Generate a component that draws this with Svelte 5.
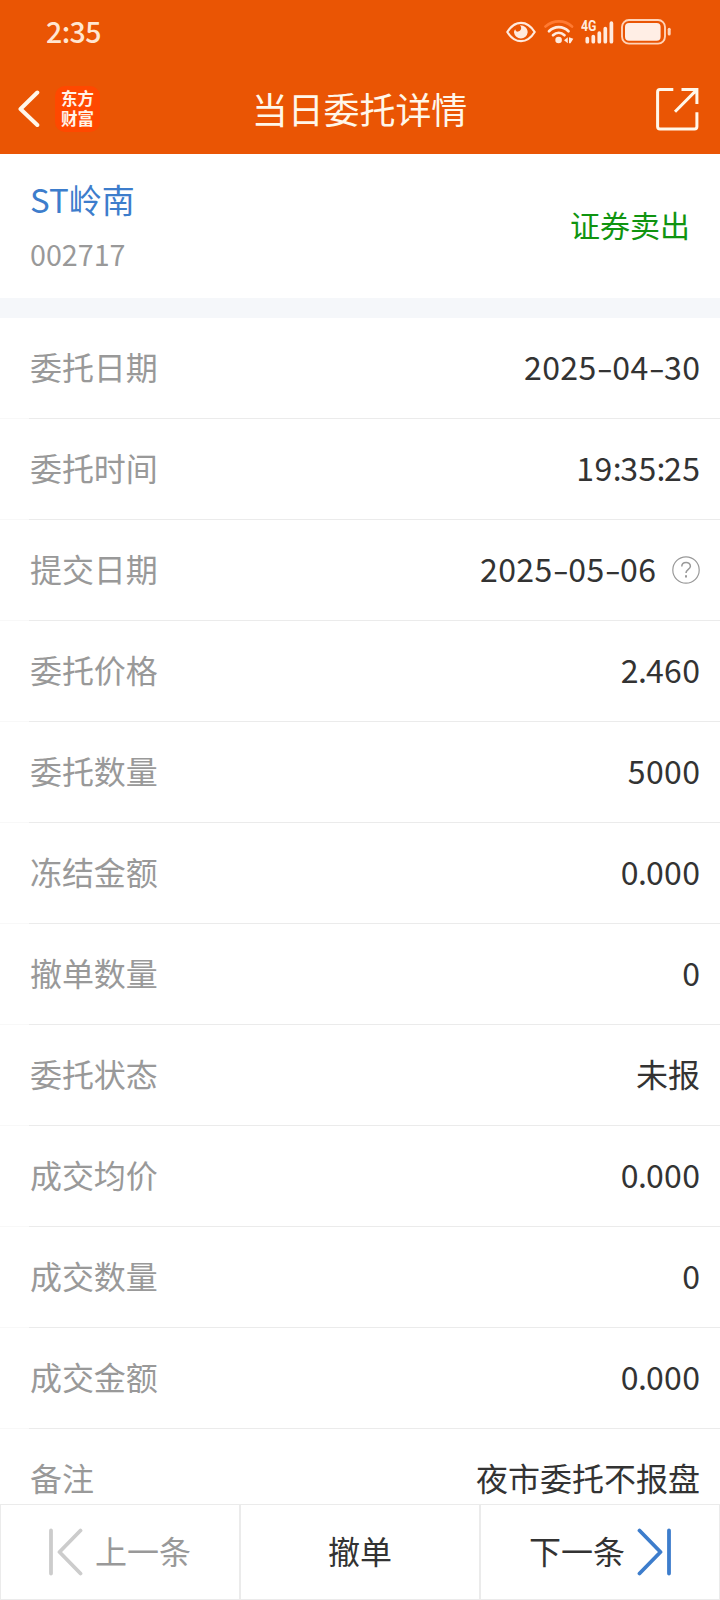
<script>
  const rows = [
    { label: '委托日期', value: '2025-04-30' },
    { label: '委托时间', value: '19:35:25' },
    { label: '提交日期', value: '2025-05-06', help: true },
    { label: '委托价格', value: '2.460' },
    { label: '委托数量', value: '5000' },
    { label: '冻结金额', value: '0.000' },
    { label: '撤单数量', value: '0' },
    { label: '委托状态', value: '未报', cjk: true },
    { label: '成交均价', value: '0.000' },
    { label: '成交数量', value: '0' },
    { label: '成交金额', value: '0.000' },
    { label: '备注', value: '夜市委托不报盘', cjk: true }
  ];
  const kinds = { '-': 'dash', ':': 'colon', '.': 'dot' };
</script>

<div class="screen">
  <header>
    <div class="status">
      <span class="clock">2:35</span>
      <div class="indicators">
        <svg class="eye" width="30" height="22" viewBox="0 0 30 22">
          <path d="M1.300 11C5 5 9.500 1.800 15 1.800S25 5 28.700 11C25 17 20.500 20.200 15 20.200S5 17 1.300 11Z" fill="none" stroke="#ffeade" stroke-width="2.200" stroke-linejoin="round" />
          <path d="M14 4.300C18.500 4.300 21.700 7.200 21.700 11.300A6.900 6.900 0 0 1 8 11.500C8 10 8.400 9 9.200 8.200C9.500 9.800 10.500 10.800 12 10.600C15 10.200 16.300 7 14 4.300Z" fill="#ffeade" />
        </svg>
        <svg class="wifi" width="30" height="24" viewBox="0 0 30 24">
          <g fill="none" stroke-linecap="round" stroke-width="2.700">
            <path d="M1.500 6.500C9.500-.3 20.500-.3 28 6.500" stroke="#ff7a32" />
            <path d="M5 11.200C10.500 5.700 19 5.700 24.500 11.200" stroke="#ffeade" />
            <path d="M9 15.200C12.500 12 17 12 20.500 15.200" stroke="#ffeade" />
          </g>
          <circle cx="14.600" cy="20" r="3.300" fill="#ffeade" />
          <path d="M20 20.200L23.800 17.200V23.200ZM25 17.200L29.300 18.800L26.500 23.200H25Z" fill="#ffeade" />
        </svg>
        <div class="signal">
          <span class="net">4G</span>
          <svg width="33" height="24" viewBox="0 0 33 24">
            <path d="M6.300 17.500V20.700M12.300 15.500V20.700M18.300 12.200V20.700M24.300 7.500V20.700M30.400 2.200V20.700" stroke="#ffeade" stroke-width="3.700" stroke-linecap="round" />
          </svg>
        </div>
        <svg class="battery" width="50" height="26" viewBox="0 0 50 26">
          <rect x="1" y="1" width="43" height="23.600" rx="7" fill="none" stroke="#ffd3b8" stroke-width="1.900" />
          <rect x="4" y="4" width="35.600" height="17.800" rx="4" fill="#ffeee5" />
          <path d="M48.200 10.200V15" stroke="#ffd3b8" stroke-width="3" stroke-linecap="round" />
        </svg>
      </div>
    </div>
    <div class="nav">
      <div class="left">
        <svg width="22" height="38" viewBox="0 0 22 38">
          <path d="M19.300 2.500L2.500 19L19.300 35" fill="none" stroke="#fff7ea" stroke-width="4" stroke-linecap="round" stroke-linejoin="round" />
        </svg>
        <div class="logo">东方<br />财富</div>
      </div>
      <h1>当日委托详情</h1>
      <svg class="share" width="43" height="43" viewBox="0 0 43 43">
        <path d="M17.300 1.600H4Q1.600 1.600 1.600 4V38.500Q1.600 40.900 4 40.900H38.500Q40.900 40.900 40.900 38.500V24.200M25.500 1.600H40.900V16M40.900 1.600L19 23.700" fill="none" stroke="#fff7ea" stroke-width="3" />
      </svg>
    </div>
  </header>

  <section class="stock">
    <div class="ident">
      <div class="name">ST岭南</div>
      <div class="code">002717</div>
    </div>
    <div class="side">证券卖出</div>
  </section>

  <main>
    {#each rows as row}
      <div class="row">
        <span class="label">{row.label}</span>
        <div class="value">
          <span class="text" class:num={!row.cjk}>{#each row.value as ch}{#if kinds[ch]}<span class="p {kinds[ch]}">{ch}</span>{:else}{ch}{/if}{/each}</span>
          {#if row.help}
            <svg width="28" height="28" viewBox="0 0 28 28" fill="none" stroke="#999">
              <circle cx="14" cy="14" r="13.200" stroke-width="1.200" />
              <path d="M9.800 10.500C9.800 5.200 18.400 5.200 18.400 10.200C18.400 13.300 14 13.500 14 17" stroke-width="1.500" />
              <path d="M14 19.300V21.500" stroke-width="2" />
            </svg>
          {/if}
        </div>
      </div>
    {/each}
  </main>

  <footer>
    <div class="btn off">
      <svg width="34" height="48" viewBox="0 0 34 48">
        <path d="M2 2.500V45.500M31.500 2.500L10.500 24L31.500 45.500" fill="none" stroke="#ccc" stroke-width="3.800" stroke-linecap="round" stroke-linejoin="round" />
      </svg>
      <span>上一条</span>
    </div>
    <div class="btn"><span>撤单</span></div>
    <div class="btn next">
      <span>下一条</span>
      <svg width="34" height="48" viewBox="0 0 34 48">
        <path d="M32 2.500V45.500M2.500 2.500L23.500 24L2.500 45.500" fill="none" stroke="#3d7dcc" stroke-width="3.800" stroke-linecap="round" stroke-linejoin="round" />
      </svg>
    </div>
  </footer>
</div>

<style>
  :global(body) { margin: 0; background: #fff; }
  .screen {
    width: 720px; height: 1600px; overflow: hidden;
    display: flex; flex-direction: column;
    background: #fff; color: #333;
    font: 400 32px/46px "Noto Sans CJK SC", sans-serif;
  }
  svg { display: block; flex: none; }
  header { height: 154px; flex: none; background: #ea5504; }
  .status { height: 64px; display: flex; justify-content: space-between; padding: 0 49px 0 46px; }
  .clock { font-size: 28.500px; font-weight: 500; line-height: 62px; color: #ffe6d2; letter-spacing: -.6px; }
  .indicators { display: flex; align-items: flex-start; }
  .eye { margin: 21px 8px 0 0; }
  .wifi { margin: 20px 7px 0 0; }
  .signal { width: 33px; margin: 21px 7px 0 0; display: grid; }
  .signal > * { grid-area: 1 / 1; }
  .net { font: 700 15px/13px "Roboto", sans-serif; color: #ffeade; margin-top: -1px; transform: scaleX(.82); transform-origin: 0 0; }
  .battery { margin-top: 19px; }
  .nav { height: 90px; display: grid; grid-template-columns: 1fr auto 1fr; align-items: center; padding: 0 21px 0 18px; }
  .left { display: flex; align-items: center; gap: 15px; }
  .logo {
    box-sizing: border-box; width: 45px; height: 46px; padding-top: 2px;
    border-radius: 10px; background: #ff4800; text-align: center;
    font-size: 16.500px; font-weight: 700; line-height: 20px; color: #fff3e8;
  }
  h1 { margin: 0; padding: 0 0 2px 2px; font-size: 36px; font-weight: 400; line-height: 50px; color: #fff7ea; letter-spacing: -.1px; }
  .share { justify-self: end; }
  .stock {
    height: 144px; flex: none; box-sizing: content-box; border-bottom: 20px solid #f5f7fa;
    display: flex; justify-content: space-between; align-items: center; padding: 0 30px;
  }
  .ident { padding-bottom: 3px; }
  .name { font-size: 33px; line-height: 50px; color: #3d7dcc; }
  .code { font-size: 28.700px; line-height: 42px; color: #999; margin-top: 9px; }
  .side { font-size: 30px; color: #109410; padding-bottom: 5px; }
  main { flex: 1; min-height: 0; overflow: hidden; }
  .row {
    height: 100px; display: flex; align-items: center; justify-content: space-between;
    padding: 0 20px 0 30px; border-bottom: 1px solid;
    border-image: linear-gradient(90deg, #f8f8f8 30px, #ebebeb 30px) 1;
  }
  .label { color: #999; padding-bottom: 4px; letter-spacing: -.1px; }
  .value { display: flex; align-items: center; gap: 16px; }
  .text { padding-bottom: 4px; }
  .num { letter-spacing: .4px; margin-right: -.4px; }
  .p { display: inline-block; text-align: center; letter-spacing: 0; }
  .dash { width: 15.500px; transform: scaleX(1.450); }
  .colon { width: 7.500px; }
  .dot { width: 7px; text-indent: -1px; }
  footer { height: 96px; flex: none; display: flex; }
  .btn { flex: 1; box-sizing: border-box; border: 1px solid #ebebeb; display: flex; align-items: center; justify-content: center; gap: 12px; }
  .btn span { padding-bottom: 5px; }
  .off { color: #999; }
</style>
